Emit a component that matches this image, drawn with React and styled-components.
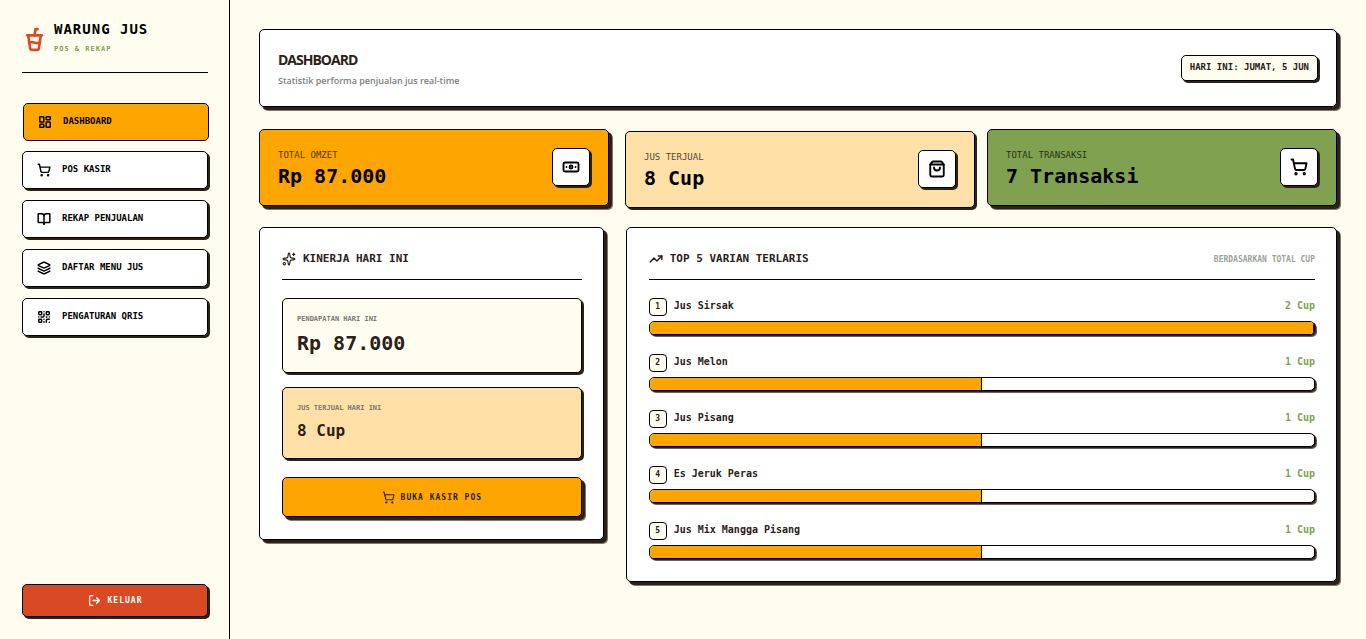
import React from 'react';
import styled, { createGlobalStyle, css, ThemeProvider } from 'styled-components';
import {
  Banknote,
  BookOpen,
  CupSoda,
  Layers,
  LayoutDashboard,
  LogOut,
  QrCode,
  ShoppingBag,
  ShoppingCart,
  Sparkles,
  TrendingUp,
} from 'lucide-react';

const theme = {
  cream: '#fffdf0',
  orange: '#ffa500',
  peach: '#ffe1a8',
  green: '#80a150',
  red: '#d94a24',
  white: '#ffffff',
  ink: '#2b2118',
  mono: "'DejaVu Sans Mono', 'Liberation Mono', monospace",
  sans: "'Open Sans', 'Noto Sans', sans-serif",
  shadowSmall: '2px 2px 0 #2b2118',
  shadowBig: '3px 3px 0 #2b2118, 4px 4px 0 rgba(43, 33, 24, 0.6)',
};

const GlobalStyle = createGlobalStyle`
  *, *::before, *::after {
    box-sizing: border-box;
  }

  body {
    margin: 0;
    background-color: ${({ theme }) => theme.cream};
    color: ${({ theme }) => theme.ink};
    font-family: ${({ theme }) => theme.mono};
    font-weight: bold;
  }

  h1, h2, p, ul, ol {
    margin: 0;
    padding: 0;
  }

  button {
    font: inherit;
    cursor: pointer;
  }

  svg {
    display: block;
    flex-shrink: 0;
  }
`;

const boxed = css`
  border: 1px solid #000;
  border-radius: 5px;
`;

const StyledWrapper = styled.div`
  display: grid;
  grid-template-columns: 230px minmax(0, 1fr);
  min-height: 100vh;
`;

const StyledSidebar = styled.aside`
  display: flex;
  flex-direction: column;
  padding: 22px 21px 22px 22px;
  border-right: 1px solid #000;
`;

const StyledBrand = styled.div`
  display: flex;
  align-items: center;
  gap: 7px;
  padding-bottom: 15px;
  border-bottom: 1px solid #000;
  color: ${({ theme }) => theme.red};
`;

const StyledBrandName = styled.p`
  color: #000;
  font-size: 14px;
  line-height: 14px;
  letter-spacing: 1px;
`;

const StyledBrandTag = styled.p`
  margin-top: 6px;
  color: ${({ theme }) => theme.green};
  font-size: 7px;
  line-height: 15px;
  letter-spacing: 1px;
`;

const StyledNav = styled.nav`
  display: flex;
  flex-direction: column;
  flex-grow: 1;
  gap: 11px;
  margin-top: 29px;
`;

const StyledNavButton = styled.button`
  ${boxed};
  display: flex;
  align-items: center;
  gap: 11px;
  height: 38px;
  padding: 0 14px;
  background-color: ${({ $active, theme }) => ($active ? theme.orange : theme.white)};
  box-shadow: ${({ $active, theme }) => ($active ? 'none' : theme.shadowSmall)};
  transform: ${({ $active }) => ($active ? 'translate(1px, 1px)' : 'none')};
  color: #000;

  && {
    font-size: 9px;
    line-height: 14px;
  }
`;

const StyledNavLabel = styled.span`
  padding-bottom: 2px;
`;

const StyledLogoutButton = styled.button`
  ${boxed};
  display: flex;
  align-items: center;
  justify-content: center;
  gap: 7px;
  height: 33px;
  background-color: ${({ theme }) => theme.red};
  box-shadow: ${({ theme }) => theme.shadowSmall};
  color: ${({ theme }) => theme.white};

  && {
    font-size: 8px;
    letter-spacing: 1px;
  }
`;

const StyledMain = styled.main`
  display: flex;
  flex-direction: column;
  gap: 22px;
  padding: 29px;
`;

const StyledPageHeader = styled.header`
  ${boxed};
  display: flex;
  align-items: center;
  justify-content: space-between;
  min-height: 78px;
  padding: 16px 18px;
  background-color: ${({ theme }) => theme.white};
  box-shadow: ${({ theme }) => theme.shadowBig};
`;

const StyledHeading = styled.h1`
  padding-top: 2px;
  font-family: ${({ theme }) => theme.sans};
  font-size: 14px;
  line-height: 24px;
  letter-spacing: -1px;
`;

const StyledSubheading = styled.p`
  color: #7a7f80;
  font-family: ${({ theme }) => theme.sans};
  font-size: 9px;
  font-weight: 600;
  line-height: 18px;
`;

const StyledDate = styled.time`
  ${boxed};
  padding: 4px 8px 6px;
  background-color: ${({ theme }) => theme.cream};
  box-shadow: ${({ theme }) => theme.shadowSmall};
  font-size: 9px;
  line-height: 14px;
`;

const StyledStats = styled.section`
  display: grid;
  grid-template-columns: repeat(3, 1fr);
  gap: 14px;
`;

const StyledStatCard = styled.article`
  ${boxed};
  display: flex;
  align-items: center;
  justify-content: space-between;
  min-height: 77px;
  padding: 0 18px 1px;
  background-color: ${({ $color, theme }) => theme[$color]};
  box-shadow: ${({ $pressed, theme }) => ($pressed ? theme.shadowSmall : theme.shadowBig)};
  transform: ${({ $pressed }) => ($pressed ? 'translate(2px, 2px)' : 'none')};
  color: #000;
`;

const StyledStatText = styled.div`
  padding-top: 4px;
`;

const StyledStatLabel = styled.p`
  font-size: 9px;
  font-weight: normal;
  line-height: 14px;
  opacity: 0.7;
`;

const StyledStatValue = styled.p`
  font-size: 20px;
  line-height: 28px;
`;

const StyledStatIcon = styled.div`
  ${boxed};
  display: flex;
  align-items: center;
  justify-content: center;
  width: 38px;
  height: 38px;
  background-color: ${({ theme }) => theme.white};
  box-shadow: ${({ theme }) => theme.shadowSmall};
`;

const StyledPanels = styled.div`
  display: grid;
  grid-template-columns: repeat(12, minmax(0, 1fr));
  align-items: start;
  gap: 22px;
  margin-top: -1px;
`;

const StyledPanel = styled.section`
  ${boxed};
  grid-column: span ${({ $span }) => $span};
  padding: 22px 21px 22px 22px;
  background-color: ${({ theme }) => theme.white};
  box-shadow: ${({ theme }) => theme.shadowBig};
`;

const StyledPanelHeader = styled.header`
  display: flex;
  align-items: center;
  gap: 7px;
  padding-bottom: 11px;
  margin-bottom: 18px;
  border-bottom: 1px solid #000;
`;

const StyledPanelTitle = styled.h2`
  flex-grow: 1;
  font-size: 11px;
  line-height: 18px;
`;

const StyledPanelNote = styled.span`
  color: #9aa39a;
  font-size: 8px;
`;

const StyledSummary = styled.div`
  ${boxed};
  padding: 14px;
  margin-bottom: ${({ $last }) => ($last ? '18px' : '14px')};
  background-color: ${({ $color, theme }) => theme[$color]};
  box-shadow: ${({ theme }) => theme.shadowSmall};
`;

const StyledSummaryLabel = styled.p`
  color: #7a7670;
  font-size: 7px;
  line-height: 12px;
`;

const StyledSummaryValue = styled.p`
  margin-top: 3px;
  font-size: ${({ $big }) => ($big ? '20px' : '16px')};
  line-height: ${({ $big }) => ($big ? '30px' : '27px')};
`;

const StyledPosButton = styled.button`
  ${boxed};
  display: flex;
  align-items: center;
  justify-content: center;
  gap: 6px;
  width: 100%;
  height: 40px;
  background-color: ${({ theme }) => theme.orange};
  box-shadow: ${({ theme }) => theme.shadowBig};
  color: ${({ theme }) => theme.ink};

  && {
    font-size: 8px;
    letter-spacing: 1px;
  }
`;

const StyledRanking = styled.ol`
  display: flex;
  flex-direction: column;
  gap: 19px;
  list-style: none;
`;

const StyledRankingRow = styled.div`
  display: flex;
  gap: 7px;
  margin-bottom: 5px;
  font-size: 10px;
  line-height: 16px;
`;

const StyledRank = styled.span`
  ${boxed};
  display: flex;
  align-items: center;
  justify-content: center;
  width: 18px;
  height: 18px;
  border-radius: 4px;
  background-color: ${({ theme }) => theme.cream};
  font-size: 8px;
`;

const StyledRankingName = styled.span`
  flex-grow: 1;
`;

const StyledRankingCount = styled.span`
  color: ${({ theme }) => theme.green};
`;

const StyledTrack = styled.div`
  ${boxed};
  height: 14px;
  overflow: hidden;
  background-color: ${({ theme }) => theme.white};
  box-shadow: 1px 1px 0 #2b2118, 2px 2px 0 rgba(43, 33, 24, 0.7);
`;

const StyledFill = styled.div`
  height: 100%;
  border-right: 1px solid #000;
  background-color: ${({ theme }) => theme.orange};
`;

const navItems = [
  { label: 'DASHBOARD', icon: LayoutDashboard, active: true },
  { label: 'POS KASIR', icon: ShoppingCart },
  { label: 'REKAP PENJUALAN', icon: BookOpen },
  { label: 'DAFTAR MENU JUS', icon: Layers },
  { label: 'PENGATURAN QRIS', icon: QrCode },
];

const stats = [
  { label: 'TOTAL OMZET', value: 'Rp 87.000', icon: Banknote, color: 'orange' },
  { label: 'JUS TERJUAL', value: '8 Cup', icon: ShoppingBag, color: 'peach', pressed: true },
  { label: 'TOTAL TRANSAKSI', value: '7 Transaksi', icon: ShoppingCart, color: 'green' },
];

const topVariants = [
  { name: 'Jus Sirsak', cups: 2 },
  { name: 'Jus Melon', cups: 1 },
  { name: 'Jus Pisang', cups: 1 },
  { name: 'Es Jeruk Peras', cups: 1 },
  { name: 'Jus Mix Mangga Pisang', cups: 1 },
];

const Sidebar = () => (
  <StyledSidebar>
    <StyledBrand>
      <CupSoda size={25} strokeWidth={2.5} />
      <div>
        <StyledBrandName>WARUNG JUS</StyledBrandName>
        <StyledBrandTag>POS &amp; REKAP</StyledBrandTag>
      </div>
    </StyledBrand>
    <StyledNav>
      {navItems.map(({ label, icon: Icon, active }) => (
        <StyledNavButton
          key={label}
          type="button"
          $active={active}
          aria-current={active ? 'page' : undefined}
        >
          <Icon size={14} strokeWidth={2.5} />
          <StyledNavLabel>{label}</StyledNavLabel>
        </StyledNavButton>
      ))}
    </StyledNav>
    <StyledLogoutButton type="button">
      <LogOut size={13} strokeWidth={2.5} />
      KELUAR
    </StyledLogoutButton>
  </StyledSidebar>
);

const Performance = () => (
  <StyledPanel $span={4}>
    <StyledPanelHeader>
      <Sparkles size={14} />
      <StyledPanelTitle>KINERJA HARI INI</StyledPanelTitle>
    </StyledPanelHeader>
    <StyledSummary $color="cream">
      <StyledSummaryLabel>PENDAPATAN HARI INI</StyledSummaryLabel>
      <StyledSummaryValue $big>Rp 87.000</StyledSummaryValue>
    </StyledSummary>
    <StyledSummary $color="peach" $last>
      <StyledSummaryLabel>JUS TERJUAL HARI INI</StyledSummaryLabel>
      <StyledSummaryValue>8 Cup</StyledSummaryValue>
    </StyledSummary>
    <StyledPosButton type="button">
      <ShoppingCart size={13} />
      BUKA KASIR POS
    </StyledPosButton>
  </StyledPanel>
);

const TopVariants = () => {
  const max = Math.max(...topVariants.map(({ cups }) => cups));

  return (
    <StyledPanel $span={8}>
      <StyledPanelHeader>
        <TrendingUp size={14} strokeWidth={2.5} />
        <StyledPanelTitle>TOP 5 VARIAN TERLARIS</StyledPanelTitle>
        <StyledPanelNote>BERDASARKAN TOTAL CUP</StyledPanelNote>
      </StyledPanelHeader>
      <StyledRanking>
        {topVariants.map(({ name, cups }, index) => (
          <li key={name}>
            <StyledRankingRow>
              <StyledRank>{index + 1}</StyledRank>
              <StyledRankingName>{name}</StyledRankingName>
              <StyledRankingCount>{cups} Cup</StyledRankingCount>
            </StyledRankingRow>
            <StyledTrack>
              <StyledFill style={{ width: `${(cups / max) * 100}%` }} />
            </StyledTrack>
          </li>
        ))}
      </StyledRanking>
    </StyledPanel>
  );
};

const App = () => (
  <ThemeProvider theme={theme}>
    <GlobalStyle />
    <StyledWrapper>
      <Sidebar />
      <StyledMain>
        <StyledPageHeader>
          <div>
            <StyledHeading>DASHBOARD</StyledHeading>
            <StyledSubheading>Statistik performa penjualan jus real-time</StyledSubheading>
          </div>
          <StyledDate>HARI INI: JUMAT, 5 JUN</StyledDate>
        </StyledPageHeader>
        <StyledStats>
          {stats.map(({ label, value, icon: Icon, color, pressed }) => (
            <StyledStatCard key={label} $color={color} $pressed={pressed}>
              <StyledStatText>
                <StyledStatLabel>{label}</StyledStatLabel>
                <StyledStatValue>{value}</StyledStatValue>
              </StyledStatText>
              <StyledStatIcon>
                <Icon size={18} strokeWidth={2.5} />
              </StyledStatIcon>
            </StyledStatCard>
          ))}
        </StyledStats>
        <StyledPanels>
          <Performance />
          <TopVariants />
        </StyledPanels>
      </StyledMain>
    </StyledWrapper>
  </ThemeProvider>
);

export default App;
